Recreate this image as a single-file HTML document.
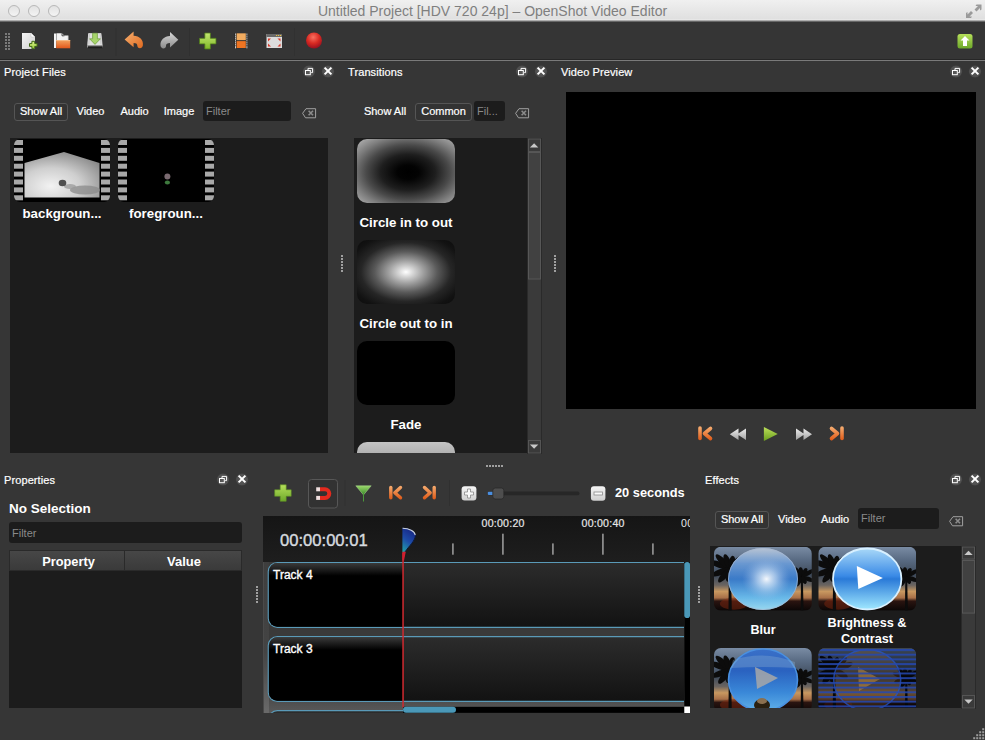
<!DOCTYPE html>
<html><head><meta charset="utf-8">
<style>
*{margin:0;padding:0;box-sizing:border-box}
html,body{width:985px;height:740px;overflow:hidden;background:#363636}
body{font-family:"Liberation Sans",sans-serif;color:#fff;position:relative}
.a{position:absolute}
svg{position:absolute;overflow:visible}
#title{left:0;top:0;width:985px;height:22px;background:linear-gradient(#f0f0f0,#e0e0e0 85%,#eaeaea 90%,#8a8a8a 95%,#4a4a4a)}
#title .t{position:absolute;left:0;width:985px;top:3px;text-align:center;font-size:14px;color:#7f7f7f;padding-left:0px}
.lt{position:absolute;top:5px;width:12px;height:12px;border-radius:50%;border:1px solid #b8b8b8;background:linear-gradient(#e2e2e2,#f4f4f4)}
#tb{left:0;top:22px;width:985px;height:38px;background:#353535}
#sep{left:0;top:59px;width:985px;height:2px;background:linear-gradient(#262626 50%,#7a7a7a 50%)}
.pt{position:absolute;font-size:11px;color:#fff;line-height:12px;-webkit-text-stroke:0.2px #fff;letter-spacing:0.1px}
.list{position:absolute;background:#1c1c1c}
.btn{position:absolute;font-size:11px;color:#fff;-webkit-text-stroke:0.2px #fff;height:18px;line-height:16px;text-align:center;white-space:nowrap}
.sel{border:1px solid #555;border-radius:3px;background:#333;line-height:14.5px}
.filt{position:absolute;background:#1c1c1c;border-radius:3px;font-size:11px;color:#8a8a8a;padding-left:3px;line-height:20px;white-space:nowrap}
.dk{position:absolute;width:12px;height:12px;border-radius:50%;background:radial-gradient(#5a5a5a,#444 60%,#3a3a3a)}
.lbl{position:absolute;font-size:13.3px;font-weight:bold;color:#fff;white-space:nowrap;line-height:15px;text-align:center}
.vsep{position:absolute;width:1px;background:#2a2a2a;border-right:1px solid #444}
.dots{position:absolute;width:2px;background:repeating-linear-gradient(#a0a0a0 0 2px,transparent 2px 3px)}
.hdots{position:absolute;height:2px;background:repeating-linear-gradient(90deg,#a0a0a0 0 2px,transparent 2px 3px)}
.thumb{position:absolute;width:96px;height:63px;border-radius:6px;background:#000;overflow:hidden}
.spr{position:absolute;top:0;width:9px;height:63px;background:repeating-linear-gradient(#000 0 2px,#a8a8a8 2px 7px,#000 7px 8px)}
.sb{position:absolute;background:#3c3c3c;border:1px solid #2c2c2c}
.sbb{position:absolute;background:#474747;border:1px solid #5a5a5a}
</style></head><body>
<div id="title" class="a">
  <div class="lt" style="left:8px"></div>
  <div class="lt" style="left:28px"></div>
  <div class="lt" style="left:48px"></div>
  <svg width="20" height="20" style="left:965px;top:2px" viewBox="965 2 20 20"><g fill="#9a9a9a"><path d="M974.5 9.5 l3.5 -3.5 h-2.5 l1 -1.5 h5 v5 l-1.5 1 v-2.5 l-3.5 3.5 z"/><path d="M973 13 l-3.5 3.5 h2.5 l-1 1.5 h-5 v-5 l1.5 -1 v2.5 l3.5 -3.5 z"/></g></svg>
  <div class="t">Untitled Project [HDV 720 24p] – OpenShot Video Editor</div>
</div>
<div id="tb" class="a"></div>
<svg width="985" height="40" style="left:0;top:22px" viewBox="0 22 985 40">
<defs>
<linearGradient id="gpage" x1="0" y1="0" x2="1" y2="1"><stop offset="0" stop-color="#f4f4f4"/><stop offset="1" stop-color="#d0d0d0"/></linearGradient>
<linearGradient id="ggreen" x1="0" y1="0" x2="0" y2="1"><stop offset="0" stop-color="#b6e05a"/><stop offset="1" stop-color="#6da82a"/></linearGradient>
<linearGradient id="gorange" x1="0" y1="0" x2="0" y2="1"><stop offset="0" stop-color="#f4a460"/><stop offset="1" stop-color="#e2571a"/></linearGradient>
<linearGradient id="gundo" x1="0" y1="0" x2="1" y2="1"><stop offset="0" stop-color="#f6b070"/><stop offset="1" stop-color="#e06a20"/></linearGradient>
<linearGradient id="ggray" x1="0" y1="0" x2="0" y2="1"><stop offset="0" stop-color="#d8d8d8"/><stop offset="1" stop-color="#8c8c8c"/></linearGradient>
<radialGradient id="gred" cx="0.45" cy="0.3" r="0.7"><stop offset="0" stop-color="#f87060"/><stop offset="0.55" stop-color="#d82a22"/><stop offset="1" stop-color="#981020"/></radialGradient>
<radialGradient id="gdk"><stop offset="0" stop-color="#5c5c5c"/><stop offset="0.6" stop-color="#535353"/><stop offset="0.88" stop-color="#4e4e4e"/><stop offset="1" stop-color="#3e3e3e"/></radialGradient>
</defs>
<g fill="#7a7a7a">
<rect x="5" y="33" width="2" height="2"/><rect x="8" y="33" width="2" height="2"/>
<rect x="5" y="36" width="2" height="2"/><rect x="8" y="36" width="2" height="2"/>
<rect x="5" y="39" width="2" height="2"/><rect x="8" y="39" width="2" height="2"/>
<rect x="5" y="42" width="2" height="2"/><rect x="8" y="42" width="2" height="2"/>
<rect x="5" y="45" width="2" height="2"/><rect x="8" y="45" width="2" height="2"/>
<rect x="5" y="48" width="2" height="2"/><rect x="8" y="48" width="2" height="2"/>
</g>
<!-- new -->
<path d="M22 33 H31 L35 37 V49 H22 Z" fill="url(#gpage)"/>
<path d="M31 33 V37 H35" fill="#fff" stroke="#c8c8c8" stroke-width="0.6"/>
<linearGradient id="gnp" x1="0" y1="0" x2="0" y2="1"><stop offset="0" stop-color="#e0f890"/><stop offset="1" stop-color="#98c838"/></linearGradient><path d="M31.9 41.3 h2.8 v2.3 h2.4 v2.8 h-2.4 v2.3 h-2.8 v-2.3 h-2.4 v-2.8 h2.4 z" fill="url(#gnp)" stroke="#3e6414" stroke-width="1"/>
<!-- open -->
<rect x="54" y="33.5" width="2.2" height="14.5" fill="#f4f4f4"/>
<path d="M56.5 33.2 H62 L64.2 35.6 H68.2 V40.5 H56.5 Z" fill="#f2f2f2"/>
<path d="M62 33.2 V35.8 H64.4" fill="none" stroke="#3a3a3a" stroke-width="0.9"/>
<path d="M68.2 35.6 V40.5" stroke="#bbb" stroke-width="0.6"/>
<path d="M56.2 40 H70.2 V48.3 H56.2 Z" fill="url(#gorange)"/>
<rect x="56.2" y="40" width="14" height="1" fill="#f8c090" opacity="0.8"/>
<!-- save -->
<path d="M88.3 33.2 H101.3 L102.8 45.5 V47.5 H87 V45.5 Z" fill="url(#ggray)"/>
<path d="M88.5 33.5 H101 L102.2 45 H87.6 Z" fill="#e2e2e2"/>
<path d="M89.5 34 L88.8 44.5 M100.2 34 L101 44.5" stroke="#b8b8b8" stroke-width="0.6"/>
<rect x="88" y="46.3" width="14.5" height="2" fill="#1e1e1e"/>
<path d="M92.6 33.2 h4.8 v5.6 h3 l-5.4 5.6 l-5.4 -5.6 h3 z" fill="#a6d46a" stroke="#6a9a3a" stroke-width="0.7"/>
<rect x="115.5" y="28" width="1" height="28" fill="#303030"/>
<!-- undo -->
<path d="M124.6 39.4 L133.6 31.6 V35.8 C139.5 36 143.6 40 142.9 45.3 C142.6 47.2 141.4 48.2 139.9 48.2 C138.4 48.2 137.3 47.2 137.3 45.6 C137.3 43.6 136 42.9 133.6 42.9 V47.2 Z" fill="url(#gundo)"/>
<!-- redo -->
<path d="M178.3 39.7 L170 32 V36 C164.3 36.2 160 40 160.5 45.5 C160.7 47.3 161.9 48.4 163.4 48.4 C164.9 48.4 166 47.4 166 45.7 C166 43.7 167.4 42.9 170 42.9 V47.4 Z" fill="url(#ggray)"/>
<rect x="189" y="28" width="1" height="28" fill="#303030"/>
<!-- add -->
<linearGradient id="gpl2" x1="0" y1="0" x2="0" y2="1"><stop offset="0" stop-color="#c4e870"/><stop offset="1" stop-color="#80b828"/></linearGradient><path d="M204.8 33 h5.6 v5.3 h5.6 v5.6 h-5.6 v5.1 h-5.6 v-5.1 h-5.3 v-5.6 h5.3 z" fill="url(#gpl2)" stroke="#4e7a1a" stroke-width="0.8"/>
<!-- film -->
<rect x="234.3" y="33" width="13.3" height="15.3" fill="#2a2a2a"/>
<rect x="236.6" y="33.3" width="9.2" height="6.9" fill="#f2ac60"/>
<rect x="236.6" y="41.1" width="9.2" height="6.9" fill="#ee7422"/>
<g fill="#f4f4f4"><rect x="235" y="33.6" width="1" height="1.1"/><rect x="246.4" y="33.6" width="1" height="1.1"/><rect x="235" y="35.6" width="1" height="1.1"/><rect x="246.4" y="35.6" width="1" height="1.1"/><rect x="235" y="37.6" width="1" height="1.1"/><rect x="246.4" y="37.6" width="1" height="1.1"/><rect x="235" y="39.6" width="1" height="1.1"/><rect x="246.4" y="39.6" width="1" height="1.1"/><rect x="235" y="41.6" width="1" height="1.1"/><rect x="246.4" y="41.6" width="1" height="1.1"/><rect x="235" y="43.6" width="1" height="1.1"/><rect x="246.4" y="43.6" width="1" height="1.1"/><rect x="235" y="45.6" width="1" height="1.1"/><rect x="246.4" y="45.6" width="1" height="1.1"/><rect x="235" y="47.2" width="1" height="1.1"/><rect x="246.4" y="47.2" width="1" height="1.1"/></g>
<!-- fullscreen -->
<rect x="266.5" y="34" width="15.5" height="14" fill="#dcdcdc"/>
<rect x="266.5" y="34" width="15.5" height="3" fill="#6a6a6a"/>
<g fill="#e8c040"><rect x="276" y="35" width="1.2" height="1"/><rect x="278" y="35" width="1.2" height="1"/><rect x="280" y="35" width="1.2" height="1"/></g>
<g fill="#d83a2a"><path d="M268 38.5 h3 l-3 3 z"/><path d="M280.5 38.5 h-3 l3 3 z"/><path d="M268 46.5 h3 l-3 -3 z"/><path d="M280.5 46.5 h-3 l3 -3 z"/></g>
<rect x="294" y="28" width="1" height="28" fill="#313131"/>
<!-- record -->
<circle cx="314" cy="40.5" r="8" fill="url(#gred)"/>
<!-- upload -->
<rect x="957.5" y="34" width="15" height="14.5" rx="2.5" fill="url(#ggreen)"/>
<path d="M965 36 l4.5 4.5 h-2.5 v5.5 h-4 v-5.5 h-2.5 z" fill="#fff"/>
</svg>
<div id="sep" class="a"></div>

<!-- ============ Project files ============ -->
<div class="pt" style="left:4px;top:66px">Project Files</div>
<svg width="40" height="14" style="left:301px;top:65px" viewBox="301 65 40 14">
<circle cx="309" cy="71.5" r="6.2" fill="url(#gdk)"/><circle cx="328" cy="71.5" r="6.2" fill="url(#gdk)"/>
<path d="M308 70.0 v-1.6 h4.6 v4.2 h-1.4" fill="none" stroke="#fff" stroke-width="1"/>
<rect x="305.5" y="70.5" width="4.8" height="4.2" fill="none" stroke="#fff" stroke-width="1"/>
<path d="M324.6 67.6 l6.8 6.8 M331.4 67.6 l-6.8 6.8" stroke="#fff" stroke-width="2" stroke-linecap="butt"/>
</svg>
<div class="btn sel" style="left:14px;top:103px;width:54px">Show All</div>
<div class="btn" style="left:72px;top:103px;width:37px">Video</div>
<div class="btn" style="left:116px;top:103px;width:37px">Audio</div>
<div class="btn" style="left:159px;top:103px;width:40px">Image</div>
<div class="filt" style="left:203px;top:101px;width:88px;height:20px">Filter</div>
<svg width="16" height="12" style="left:302px;top:108px" viewBox="0 0 16 12"><path d="M0.6 5.3 L4 0.7 H13.6 V9.8 H3.5 Z" fill="none" stroke="#a0a0a0" stroke-width="1"/><path d="M6.6 2.8 l4.4 4.4 M11 2.8 l-4.4 4.4" stroke="#8c8c8c" stroke-width="1.6"/></svg>
<div class="list" style="left:10px;top:138px;width:318px;height:315px"></div>
<svg width="96" height="63" style="left:14px;top:139px" viewBox="0 0 96 63">
<defs><radialGradient id="groom" cx="0.35" cy="0.75" r="0.8"><stop offset="0" stop-color="#f2f2f2"/><stop offset="0.5" stop-color="#cfcfcf"/><stop offset="1" stop-color="#8a8a8a"/></radialGradient></defs>
<rect x="0" y="0" width="96" height="63" rx="6" fill="#000"/><clipPath id="cl1"><rect x="0" y="0" width="96" height="63" rx="6"/></clipPath><g clip-path="url(#cl1)"><rect x="0" y="1.0" width="9" height="5" fill="#a8a8a8"/><rect x="0" y="8.9" width="9" height="5" fill="#a8a8a8"/><rect x="0" y="16.8" width="9" height="5" fill="#a8a8a8"/><rect x="0" y="24.7" width="9" height="5" fill="#a8a8a8"/><rect x="0" y="32.6" width="9" height="5" fill="#a8a8a8"/><rect x="0" y="40.5" width="9" height="5" fill="#a8a8a8"/><rect x="0" y="48.4" width="9" height="5" fill="#a8a8a8"/><rect x="0" y="56.3" width="9" height="5" fill="#a8a8a8"/><rect x="87" y="1.0" width="9" height="5" fill="#a8a8a8"/><rect x="87" y="8.9" width="9" height="5" fill="#a8a8a8"/><rect x="87" y="16.8" width="9" height="5" fill="#a8a8a8"/><rect x="87" y="24.7" width="9" height="5" fill="#a8a8a8"/><rect x="87" y="32.6" width="9" height="5" fill="#a8a8a8"/><rect x="87" y="40.5" width="9" height="5" fill="#a8a8a8"/><rect x="87" y="48.4" width="9" height="5" fill="#a8a8a8"/><rect x="87" y="56.3" width="9" height="5" fill="#a8a8a8"/></g>
<path d="M10.5 24 L50 13 L85.5 24 V58.5 H10.5 Z" fill="url(#groom)"/>
<ellipse cx="71" cy="51" rx="15" ry="4.6" fill="#8a8a8a" opacity="0.75"/>
<ellipse cx="56" cy="47.5" rx="6" ry="2.6" fill="#9a9a9a" opacity="0.75"/>
<ellipse cx="48.5" cy="44" rx="3.8" ry="3.2" fill="#505050"/>
</svg>
<div class="lbl" style="left:10px;top:206px;width:104px;font-size:13.3px">backgroun...</div>
<svg width="96" height="63" style="left:118px;top:139px" viewBox="0 0 96 63">
<rect x="0" y="0" width="96" height="63" rx="6" fill="#000"/><clipPath id="cl2"><rect x="0" y="0" width="96" height="63" rx="6"/></clipPath><g clip-path="url(#cl2)"><rect x="0" y="1.0" width="9" height="5" fill="#a8a8a8"/><rect x="0" y="8.9" width="9" height="5" fill="#a8a8a8"/><rect x="0" y="16.8" width="9" height="5" fill="#a8a8a8"/><rect x="0" y="24.7" width="9" height="5" fill="#a8a8a8"/><rect x="0" y="32.6" width="9" height="5" fill="#a8a8a8"/><rect x="0" y="40.5" width="9" height="5" fill="#a8a8a8"/><rect x="0" y="48.4" width="9" height="5" fill="#a8a8a8"/><rect x="0" y="56.3" width="9" height="5" fill="#a8a8a8"/><rect x="87" y="1.0" width="9" height="5" fill="#a8a8a8"/><rect x="87" y="8.9" width="9" height="5" fill="#a8a8a8"/><rect x="87" y="16.8" width="9" height="5" fill="#a8a8a8"/><rect x="87" y="24.7" width="9" height="5" fill="#a8a8a8"/><rect x="87" y="32.6" width="9" height="5" fill="#a8a8a8"/><rect x="87" y="40.5" width="9" height="5" fill="#a8a8a8"/><rect x="87" y="48.4" width="9" height="5" fill="#a8a8a8"/><rect x="87" y="56.3" width="9" height="5" fill="#a8a8a8"/></g>
<ellipse cx="49.4" cy="43.5" rx="2.6" ry="2" fill="#3e7a3e"/>
<circle cx="49.4" cy="37.6" r="3" fill="#7a6a70"/>
</svg>
<div class="lbl" style="left:114px;top:206px;width:104px;font-size:13.3px">foregroun...</div>
<div class="dots" style="left:341px;top:255px;height:17px"></div>

<!-- ============ Transitions ============ -->
<div class="pt" style="left:348px;top:66px">Transitions</div>
<svg width="40" height="14" style="left:514px;top:65px" viewBox="514 65 40 14">
<circle cx="522" cy="71.5" r="6.2" fill="url(#gdk)"/><circle cx="541" cy="71.5" r="6.2" fill="url(#gdk)"/>
<path d="M521 70.0 v-1.6 h4.6 v4.2 h-1.4" fill="none" stroke="#fff" stroke-width="1"/>
<rect x="518.5" y="70.5" width="4.8" height="4.2" fill="none" stroke="#fff" stroke-width="1"/>
<path d="M537.6 67.6 l6.8 6.8 M544.4 67.6 l-6.8 6.8" stroke="#fff" stroke-width="2" stroke-linecap="butt"/>
</svg>
<div class="btn" style="left:360px;top:103px;width:50px">Show All</div>
<div class="btn sel" style="left:415px;top:103px;width:57px">Common</div>
<div class="filt" style="left:474px;top:101px;width:31px;height:20px">Fil...</div>
<svg width="16" height="12" style="left:515px;top:108px" viewBox="0 0 16 12"><path d="M0.6 5.3 L4 0.7 H13.6 V9.8 H3.5 Z" fill="none" stroke="#a0a0a0" stroke-width="1"/><path d="M6.6 2.8 l4.4 4.4 M11 2.8 l-4.4 4.4" stroke="#8c8c8c" stroke-width="1.6"/></svg>
<div class="list" style="left:354px;top:138px;width:174px;height:315px;overflow:hidden">
  <div class="a" style="left:3px;top:1px;width:98px;height:64px;border-radius:10px;background:radial-gradient(ellipse farthest-corner at 52% 52%,#000 0%,#030303 15%,#1e1e1e 38%,#4a4a4a 58%,#7c7c7c 76%,#b8b8b8 100%)"></div>
  <div class="lbl" style="left:0;top:77px;width:104px">Circle in to out</div>
  <div class="a" style="left:3px;top:102px;width:98px;height:64px;border-radius:10px;background:radial-gradient(ellipse farthest-corner at 50% 50%,#fff 0%,#d8d8d8 10%,#a0a0a0 25%,#5a5a5a 45%,#262626 65%,#121212 85%,#0c0c0c 100%)"></div>
  <div class="lbl" style="left:0;top:178px;width:104px">Circle out to in</div>
  <div class="a" style="left:3px;top:203px;width:98px;height:64px;border-radius:10px;background:#000"></div>
  <div class="lbl" style="left:0;top:279px;width:104px">Fade</div>
  <div class="a" style="left:3px;top:304px;width:98px;height:64px;border-radius:10px;background:linear-gradient(#c4c4c4,#9a9a9a 40%,#808080)"></div>
</div>
<svg width="15" height="316" style="left:527px;top:137.5px" viewBox="527 137.5 15 316">
<rect x="527.5" y="138" width="14" height="315" fill="#3a3a3a" stroke="#2a2a2a" stroke-width="1"/>
<rect x="528.5" y="138.5" width="12" height="12.5" fill="#3a3a3a" stroke="#555" stroke-width="1"/>
<path d="M534.1 142.8 L538.3 147 H529.9 Z" fill="#c8c8c8"/>
<rect x="528.5" y="152" width="12" height="126.5" fill="#414141" stroke="#575757" stroke-width="1"/>
<rect x="528.5" y="440" width="12" height="12.5" fill="#3a3a3a" stroke="#555" stroke-width="1"/>
<path d="M534.1 448.2 L538.3 444 H529.9 Z" fill="#c8c8c8"/>
</svg>
<div class="dots" style="left:554px;top:255px;height:17px"></div>

<!-- ============ Video preview ============ -->
<div class="pt" style="left:561px;top:66px">Video Preview</div>
<svg width="40" height="14" style="left:948px;top:65px" viewBox="948 65 40 14">
<circle cx="956" cy="71.5" r="6.2" fill="url(#gdk)"/><circle cx="975" cy="71.5" r="6.2" fill="url(#gdk)"/>
<path d="M955 70.0 v-1.6 h4.6 v4.2 h-1.4" fill="none" stroke="#fff" stroke-width="1"/>
<rect x="952.5" y="70.5" width="4.8" height="4.2" fill="none" stroke="#fff" stroke-width="1"/>
<path d="M971.6 67.6 l6.8 6.8 M978.4 67.6 l-6.8 6.8" stroke="#fff" stroke-width="2" stroke-linecap="butt"/>
</svg>
<div class="a" style="left:566px;top:92px;width:410px;height:317px;background:#000"></div>

<svg width="160" height="24" style="left:690px;top:422px" viewBox="690 422 160 24">
<defs>
<linearGradient id="gor2" gradientUnits="userSpaceOnUse" x1="0" y1="426" x2="0" y2="441"><stop offset="0" stop-color="#f7b276"/><stop offset="1" stop-color="#df5512"/></linearGradient>
<linearGradient id="ggr2" x1="0" y1="0" x2="0" y2="1"><stop offset="0" stop-color="#ececec"/><stop offset="1" stop-color="#a2a2a2"/></linearGradient>
<linearGradient id="ggn2" x1="0" y1="0" x2="0" y2="1"><stop offset="0" stop-color="#bde05a"/><stop offset="1" stop-color="#6a9e1e"/></linearGradient>
</defs>
<g stroke="url(#gor2)" stroke-width="3.6" stroke-linecap="round" stroke-linejoin="round" fill="none">
<path d="M700 428 V438.5"/><path d="M710.5 428.5 L704.5 433.5 L710.5 438.5"/>
<path d="M842 428 V438.5"/><path d="M831.5 428.5 L837.5 433.5 L831.5 438.5"/>
</g>
<path d="M729.8 434.2 L738.5 428.6 V439.9 Z M737.2 434.2 L746 428.6 V439.9 Z" fill="url(#ggr2)"/>
<path d="M763.9 426.9 L777.7 433.9 L763.9 441 Z" fill="url(#ggn2)"/>
<path d="M796 428.6 L804.6 434.2 L796 439.9 Z M803.5 428.6 L812 434.2 L803.5 439.9 Z" fill="url(#ggr2)"/>
</svg>
<div class="hdots" style="left:486px;top:465px;width:17px"></div>

<!-- ============ Properties ============ -->
<div class="pt" style="left:4px;top:474px">Properties</div>
<svg width="40" height="14" style="left:215px;top:473px" viewBox="215 473 40 14">
<circle cx="223" cy="479.5" r="6.2" fill="url(#gdk)"/><circle cx="242" cy="479.5" r="6.2" fill="url(#gdk)"/>
<path d="M222 478.0 v-1.6 h4.6 v4.2 h-1.4" fill="none" stroke="#fff" stroke-width="1"/>
<rect x="219.5" y="478.5" width="4.8" height="4.2" fill="none" stroke="#fff" stroke-width="1"/>
<path d="M238.6 475.6 l6.8 6.8 M245.4 475.6 l-6.8 6.8" stroke="#fff" stroke-width="2" stroke-linecap="butt"/>
</svg>
<div class="a" style="left:9px;top:501px;font-size:13.5px;font-weight:bold;line-height:16px">No Selection</div>
<div class="filt" style="left:9px;top:522px;width:233px;height:21px;line-height:22px">Filter</div>
<div class="list" style="left:9px;top:550px;width:233px;height:158px"></div>
<div class="a" style="left:9px;top:550px;width:233px;height:21px;background:linear-gradient(#474747,#3a3a3a);border:1px solid #2a2a2a"></div>
<div class="a" style="left:124px;top:551px;width:1px;height:20px;background:#2a2a2a"></div>
<div class="a" style="left:10px;top:554px;width:114px;font-size:12.8px;font-weight:bold;text-align:center;line-height:15px;padding-left:3px">Property</div>
<div class="a" style="left:125px;top:554px;width:117px;font-size:13px;font-weight:bold;text-align:center;line-height:15px;padding-left:1px">Value</div>
<div class="dots" style="left:256px;top:586px;height:17px"></div>

<!-- ============ Timeline ============ -->
<svg width="240" height="34" style="left:265px;top:476px" viewBox="265 476 240 34">
<defs>
<linearGradient id="gmk" x1="0" y1="0" x2="0" y2="1"><stop offset="0" stop-color="#9ad86a"/><stop offset="1" stop-color="#3a8a2a"/></linearGradient>
<linearGradient id="gwb" x1="0" y1="0" x2="0" y2="1"><stop offset="0" stop-color="#f6f6f6"/><stop offset="1" stop-color="#cfcfcf"/></linearGradient>
<linearGradient id="gor3" gradientUnits="userSpaceOnUse" x1="0" y1="485" x2="0" y2="500"><stop offset="0" stop-color="#f7b276"/><stop offset="1" stop-color="#df5512"/></linearGradient>
</defs>
<path d="M280.2 484.8 h6 v5 h5 v6.5 h-5 v5 h-6 v-5 h-5.5 v-6.5 h5.5 z" fill="url(#ggreen)" stroke="#5c8f22" stroke-width="0.6"/>
<rect x="308.5" y="479.5" width="29" height="28.5" rx="3" fill="#323232" stroke="#575757" stroke-width="1"/>
<path d="M320 489.3 H325 A4.3 4.3 0 0 1 325 497.9 H320" fill="none" stroke="#e42a1e" stroke-width="4"/>
<rect x="316.2" y="487.3" width="3.8" height="4" fill="#f0e0e0"/><rect x="316.2" y="495.9" width="3.8" height="4" fill="#f0e0e0"/>
<rect x="344.5" y="480" width="1" height="26" fill="#303030"/>
<path d="M355.8 485.8 H371.2 L363.5 494.9 Z" fill="url(#gmk)" stroke="#a8d890" stroke-width="0.5"/>
<rect x="363" y="494" width="1" height="7.5" fill="#4a9a3a"/>
<g stroke="url(#gor3)" stroke-width="3.4" stroke-linecap="round" stroke-linejoin="round" fill="none">
<path d="M390.8 487.5 V497.8"/><path d="M400.5 487.5 L394.8 492.7 L400.5 497.8"/>
<path d="M434.2 487.5 V497.8"/><path d="M424.5 487.5 L430.2 492.7 L424.5 497.8"/>
</g>
<rect x="449" y="480" width="1" height="26" fill="#303030"/>
<rect x="461.6" y="486.2" width="14.8" height="14.4" rx="3" fill="url(#gwb)"/>
<path d="M467.5 489 h3 v3 h3 v3 h-3 v3 h-3 v-3 h-3 v-3 h3 z" fill="#fafafa" stroke="#8a8a8a" stroke-width="0.8"/>
<rect x="487.8" y="491.5" width="91.7" height="3.8" rx="1.9" fill="#272727"/>
<rect x="487.8" y="491.8" width="6" height="3.2" rx="1" fill="#4a8ee0"/>
<rect x="492.8" y="488" width="11" height="11" rx="2.5" fill="#4e4e4e" stroke="#2a2a2a" stroke-width="0.8"/>
<rect x="590.9" y="486.2" width="14.5" height="14.5" rx="3" fill="url(#gwb)"/>
<rect x="594" y="492" width="8.4" height="3" fill="#fafafa" stroke="#8a8a8a" stroke-width="0.8"/>
</svg>
<div class="a" style="left:615px;top:485px;font-size:12.8px;font-weight:bold;line-height:15px;white-space:nowrap">20 seconds</div>

<!-- timeline body -->
<div class="a" style="left:263px;top:516px;width:427px;height:197px;background:#3c3c3c;overflow:hidden">
  <div class="a" style="left:0;top:0;width:427px;height:46px;background:linear-gradient(#151515,#1e1e1e)"></div>
  <div class="a" style="left:0;top:46px;width:427px;height:151px;background:linear-gradient(#3a3a3a 0,#3a3a3a 120px,#5a5a5a 151px)"></div><div class="a" style="left:0;top:46px;width:6px;height:151px;background:linear-gradient(#3e3e3e,#444 60%,#6a6a6a)"></div><div class="a" style="left:0;top:46px;width:1px;height:151px;background:#4a4a4a"></div>
</div>
<div class="a" style="left:280px;top:531px;font-size:16.6px;color:#d6dadf;line-height:19px;white-space:nowrap;-webkit-text-stroke:0.4px #d6dadf">00:00:00:01</div>
<div class="a" style="left:481.5px;top:517px;font-size:10.6px;color:#e6e6e6;line-height:12px;letter-spacing:0.25px;-webkit-text-stroke:0.2px #e6e6e6">00:00:20</div>
<div class="a" style="left:581.5px;top:517px;font-size:10.6px;color:#e6e6e6;line-height:12px;letter-spacing:0.25px;-webkit-text-stroke:0.2px #e6e6e6">00:00:40</div>
<div class="a" style="left:681px;top:517px;width:9px;overflow:hidden;font-size:10.6px;color:#e6e6e6;line-height:12px;letter-spacing:0.25px;white-space:nowrap">00:01:00</div>
<svg width="427" height="197" style="left:263px;top:516px" viewBox="263 516 427 197">
<defs>
<linearGradient id="gtrl" x1="0" y1="0" x2="0" y2="1"><stop offset="0" stop-color="#3a3a3a"/><stop offset="0.2" stop-color="#000"/><stop offset="1" stop-color="#000"/></linearGradient>
<linearGradient id="gtrr" x1="0" y1="0" x2="0" y2="1"><stop offset="0" stop-color="#2c2c2c"/><stop offset="1" stop-color="#121212"/></linearGradient>
<linearGradient id="gph" x1="0.4" y1="0" x2="0" y2="1"><stop offset="0" stop-color="#182a88"/><stop offset="0.45" stop-color="#1e4ca8"/><stop offset="1" stop-color="#22a8a8"/></linearGradient>
<clipPath id="ctr"><rect x="263" y="516" width="421" height="197"/></clipPath>
</defs>
<g fill="#8a8a8a">
<rect x="452" y="543.4" width="1.8" height="11.3"/><rect x="552" y="543.4" width="1.8" height="11.3"/><rect x="652" y="543.4" width="1.8" height="11.3"/>
<rect x="502" y="533.7" width="1.8" height="21"/><rect x="602" y="533.7" width="1.8" height="21"/>
</g>
<g clip-path="url(#ctr)">
<rect x="268.3" y="562.5" width="440" height="64.8" rx="9" fill="url(#gtrr)" stroke="#5a9ab8" stroke-width="1.2"/>
<path d="M403 563.1 H277.3 A8.4 8.4 0 0 0 268.9 571.5 V618.3 A8.4 8.4 0 0 0 277.3 626.7 H403 Z" fill="url(#gtrl)"/>
<rect x="268.3" y="636.6" width="440" height="64.8" rx="9" fill="url(#gtrr)" stroke="#5a9ab8" stroke-width="1.2"/>
<path d="M403 637.2 H277.3 A8.4 8.4 0 0 0 268.9 645.6 V692.4 A8.4 8.4 0 0 0 277.3 700.8 H403 Z" fill="url(#gtrl)"/>
<rect x="268.3" y="710.7" width="440" height="64.8" rx="9" fill="url(#gtrr)" stroke="#5a9ab8" stroke-width="1.2"/>
</g>
<rect x="684.3" y="562" width="5.7" height="151" fill="#000"/>
<rect x="684.3" y="562" width="5.7" height="56" rx="2.8" fill="#4a98b8"/>
<rect x="403" y="706.8" width="281.3" height="6" fill="#000"/>
<rect x="403" y="706.8" width="53" height="6" rx="3" fill="#4a98b8"/>
<rect x="684.3" y="706.5" width="5.7" height="6.5" fill="#fff"/>
<rect x="402.3" y="553" width="1.5" height="154.3" fill="#d02a30"/>
<path d="M402.4 527.8 C409 527.8 415.6 531 415.6 535.5 C415.6 541 409 546 405.1 551.8 L402.4 552.5 Z" fill="url(#gph)"/>
<path d="M402.6 528.3 C409 528.3 414.8 531 415.2 535" fill="none" stroke="#c8d0dc" stroke-width="1.1"/><path d="M415.4 536 C415 541 409 546 405.1 551.8" fill="none" stroke="#0c1830" stroke-width="1"/>
<path d="M402.4 551.8 L405.8 551.8 L404 560.5 L402.4 560.5 Z" fill="#d02030"/>
</svg>
<div class="a" style="left:273px;top:569px;font-size:12px;line-height:13px;color:#fff;-webkit-text-stroke:0.35px #fff">Track 4</div>
<div class="a" style="left:273px;top:643px;font-size:12px;line-height:13px;color:#fff;-webkit-text-stroke:0.35px #fff">Track 3</div>

<!-- ============ Effects ============ -->
<div class="pt" style="left:705px;top:474px">Effects</div>
<svg width="40" height="14" style="left:948px;top:473px" viewBox="948 473 40 14">
<circle cx="956" cy="479.5" r="6.2" fill="url(#gdk)"/><circle cx="975" cy="479.5" r="6.2" fill="url(#gdk)"/>
<path d="M955 478.0 v-1.6 h4.6 v4.2 h-1.4" fill="none" stroke="#fff" stroke-width="1"/>
<rect x="952.5" y="478.5" width="4.8" height="4.2" fill="none" stroke="#fff" stroke-width="1"/>
<path d="M971.6 475.6 l6.8 6.8 M978.4 475.6 l-6.8 6.8" stroke="#fff" stroke-width="2" stroke-linecap="butt"/>
</svg>
<div class="btn sel" style="left:715px;top:511px;width:54px">Show All</div>
<div class="btn" style="left:776px;top:511px;width:32px">Video</div>
<div class="btn" style="left:819px;top:511px;width:32px">Audio</div>
<div class="filt" style="left:858px;top:508px;width:81px;height:21px">Filter</div>
<svg width="16" height="12" style="left:949px;top:515.5px" viewBox="0 0 16 12"><path d="M0.6 5.3 L4 0.7 H13.6 V9.8 H3.5 Z" fill="none" stroke="#a0a0a0" stroke-width="1"/><path d="M6.6 2.8 l4.4 4.4 M11 2.8 l-4.4 4.4" stroke="#8c8c8c" stroke-width="1.6"/></svg>
<div class="list" style="left:710px;top:546px;width:252px;height:162px"></div>
<svg width="252" height="162" style="left:710px;top:546px;overflow:hidden" viewBox="710 546 252 162">
<defs>
<linearGradient id="gsky" x1="0" y1="0" x2="0" y2="1">
<stop offset="0" stop-color="#7a8ca4"/><stop offset="0.2" stop-color="#5a6c84"/><stop offset="0.45" stop-color="#3e4a5a"/><stop offset="0.6" stop-color="#6a6460"/>
<stop offset="0.7" stop-color="#c89860"/><stop offset="0.8" stop-color="#a87048"/><stop offset="0.85" stop-color="#2a1410"/><stop offset="1" stop-color="#0a0606"/></linearGradient>
<linearGradient id="gsph1" x1="0" y1="0" x2="0" y2="1"><stop offset="0" stop-color="#b8c4d4"/><stop offset="0.25" stop-color="#6a98d0"/><stop offset="0.5" stop-color="#3a7ac8"/><stop offset="0.8" stop-color="#68b8e8"/><stop offset="1" stop-color="#98d8f0"/></linearGradient><radialGradient id="ghl1" cx="0.55" cy="0.5" r="0.35"><stop offset="0" stop-color="#fff" stop-opacity="0.95"/><stop offset="0.4" stop-color="#d8e8f8" stop-opacity="0.6"/><stop offset="1" stop-color="#8ab0e0" stop-opacity="0"/></radialGradient><filter id="fbl" x="-10%" y="-10%" width="120%" height="120%"><feGaussianBlur stdDeviation="0.7"/></filter>
<linearGradient id="gsph2" x1="0" y1="0" x2="0" y2="1"><stop offset="0" stop-color="#a8d8f8"/><stop offset="0.45" stop-color="#3a8ae6"/><stop offset="0.5" stop-color="#2a7ad8"/><stop offset="1" stop-color="#a0e8ff"/></linearGradient>
<linearGradient id="gsph3" x1="0" y1="0" x2="0" y2="1"><stop offset="0" stop-color="#3a70c8"/><stop offset="0.35" stop-color="#2a62c0"/><stop offset="0.7" stop-color="#3a88d8"/><stop offset="1" stop-color="#60b0e8"/></linearGradient>
<symbol id="sunset" viewBox="0 0 98 64">
<rect width="98" height="64" fill="url(#gsky)"/>
<ellipse cx="20" cy="57" rx="14" ry="6" fill="#8a2a10" opacity="0.45"/>
<g fill="#0c0c0c"><path d="M14.9 22.0 L17.1 22.0 L17.9 64 L14.6 64 Z"/><ellipse cx="5.7" cy="18.2" rx="11.0" ry="3.1" transform="rotate(200 5.7 18.2)"/><ellipse cx="9.0" cy="15.0" rx="9.9" ry="3.1" transform="rotate(225 9.0 15.0)"/><ellipse cx="13.4" cy="14.8" rx="7.7" ry="3.1" transform="rotate(250 13.4 14.8)"/><ellipse cx="17.7" cy="15.6" rx="6.6" ry="3.1" transform="rotate(285 17.7 15.6)"/><ellipse cx="22.2" cy="15.8" rx="8.8" ry="3.1" transform="rotate(315 22.2 15.8)"/><ellipse cx="25.3" cy="18.6" rx="9.9" ry="3.1" transform="rotate(340 25.3 18.6)"/><ellipse cx="6.7" cy="25.4" rx="9.9" ry="3.1" transform="rotate(160 6.7 25.4)"/><ellipse cx="10.3" cy="28.7" rx="8.8" ry="3.1" transform="rotate(130 10.3 28.7)"/><ellipse cx="14.9" cy="28.5" rx="6.6" ry="3.1" transform="rotate(100 14.9 28.5)"/><ellipse cx="22.7" cy="25.8" rx="7.7" ry="3.1" transform="rotate(30 22.7 25.8)"/><path d="M87.1 30.0 L88.9 30.0 L89.7 64 L86.8 64 Z"/><ellipse cx="81.2" cy="27.5" rx="7.2" ry="2.2" transform="rotate(200 81.2 27.5)"/><ellipse cx="83.9" cy="25.1" rx="6.4" ry="2.2" transform="rotate(230 83.9 25.1)"/><ellipse cx="87.2" cy="25.3" rx="4.8" ry="2.2" transform="rotate(260 87.2 25.3)"/><ellipse cx="90.4" cy="25.8" rx="4.8" ry="2.2" transform="rotate(300 90.4 25.8)"/><ellipse cx="94.2" cy="26.4" rx="7.2" ry="2.2" transform="rotate(330 94.2 26.4)"/><ellipse cx="82.0" cy="32.2" rx="6.4" ry="2.2" transform="rotate(160 82.0 32.2)"/><ellipse cx="85.2" cy="34.8" rx="5.6" ry="2.2" transform="rotate(120 85.2 34.8)"/><ellipse cx="94.0" cy="32.2" rx="6.4" ry="2.2" transform="rotate(20 94.0 32.2)"/><ellipse cx="90.0" cy="33.5" rx="4.0" ry="2.2" transform="rotate(60 90.0 33.5)"/></g>
</symbol>
<clipPath id="ce1"><rect x="713.9" y="546.7" width="98" height="64" rx="7"/></clipPath>
<clipPath id="ce2"><rect x="818.2" y="546.7" width="98" height="64" rx="7"/></clipPath>
<clipPath id="ce3"><rect x="713.9" y="648" width="98" height="64" rx="7"/></clipPath>
<clipPath id="ce4"><rect x="818.2" y="648" width="98" height="64" rx="7"/></clipPath>
<pattern id="pstr" patternUnits="userSpaceOnUse" x="0" y="649" width="4" height="4.7"><rect width="4" height="2" fill="#2448b0" opacity="0.85"/></pattern>
</defs>
<g clip-path="url(#ce1)">
<use href="#sunset" x="713.9" y="546.7" width="98" height="64"/>
<g filter="url(#fbl)"><ellipse cx="763" cy="579" rx="35" ry="31" fill="url(#gsph1)"/>
<ellipse cx="763" cy="579" rx="35" ry="31" fill="url(#ghl1)"/>
<ellipse cx="763" cy="579" rx="34.5" ry="30.5" fill="none" stroke="#a8b8d0" stroke-width="1" opacity="0.7"/></g>
</g>
<g clip-path="url(#ce2)">
<use href="#sunset" x="818.2" y="546.7" width="98" height="64"/>
<ellipse cx="867.2" cy="579" rx="34.2" ry="30.5" fill="url(#gsph2)" stroke="#d8f0ff" stroke-width="1.8"/>
<path d="M856.8 566 L882.9 577.9 L858.3 589 Z" fill="#fff"/>
</g>
<g clip-path="url(#ce3)">
<use href="#sunset" x="713.9" y="648" width="98" height="64"/>
<ellipse cx="763" cy="680" rx="34.5" ry="31" fill="url(#gsph3)" stroke="#4a90e0" stroke-width="1.6"/>
<path d="M733 660 Q763 650 795 662 L795 668 Q763 666 731 668 Z" fill="#8ab0d0" opacity="0.35"/>
<path d="M755 667 L778 678 L757 689 Z" fill="#a8a8a8" opacity="0.85"/>
<ellipse cx="762" cy="705" rx="8" ry="6" fill="#2a2010"/>
<ellipse cx="762" cy="701" rx="5" ry="3" fill="#8a7050"/>
</g>
<g clip-path="url(#ce4)">
<use href="#sunset" x="818.2" y="648" width="98" height="64"/>
<rect x="818.2" y="648" width="98" height="64" fill="#000" opacity="0.5"/>
<ellipse cx="867.2" cy="680" rx="33" ry="30" fill="#d09040" opacity="0.18"/><ellipse cx="867.2" cy="680" rx="33.5" ry="30.5" fill="none" stroke="#2a5ad0" stroke-width="1.5" opacity="0.7"/>
<path d="M858 667 L880 679 L859 691 Z" fill="#e0a040" opacity="0.45"/>
<rect x="818.2" y="648" width="98" height="64" fill="url(#pstr)"/>
</g>
</svg>
<div class="lbl" style="left:713px;top:623px;width:100px;font-size:12.6px">Blur</div>
<div class="lbl" style="left:813px;top:614.5px;width:108px;font-size:12.7px;line-height:16px">Brightness &amp;<br>Contrast</div>
<svg width="15" height="164" style="left:961px;top:544.5px" viewBox="961 544.5 15 164">
<rect x="961.5" y="546" width="14" height="162" fill="#3a3a3a" stroke="#2a2a2a" stroke-width="1"/>
<rect x="962.5" y="546.5" width="12" height="12" fill="#3a3a3a" stroke="#555" stroke-width="1"/>
<path d="M968.5 550.3 L972.7 554.5 H964.3 Z" fill="#c8c8c8"/>
<rect x="962.5" y="560" width="12" height="52.6" fill="#414141" stroke="#575757" stroke-width="1"/>
<rect x="962.5" y="695" width="12" height="12.5" fill="#3a3a3a" stroke="#555" stroke-width="1"/>
<path d="M968.5 703.2 L972.7 699 H964.3 Z" fill="#c8c8c8"/>
</svg>
<div class="dots" style="left:698px;top:586px;height:17px"></div>
<svg width="14" height="14" style="left:971px;top:726px" viewBox="971 726 14 14"><g fill="#9a9a9a"><rect x="982.2" y="728.2" width="2" height="2"/><rect x="979.2" y="731.2" width="2" height="2"/><rect x="982.2" y="731.2" width="2" height="2"/><rect x="976.2" y="734.2" width="2" height="2"/><rect x="979.2" y="734.2" width="2" height="2"/><rect x="982.2" y="734.2" width="2" height="2"/><rect x="973.2" y="737.2" width="2" height="2"/><rect x="976.2" y="737.2" width="2" height="2"/><rect x="979.2" y="737.2" width="2" height="2"/><rect x="982.2" y="737.2" width="2" height="2"/></g></svg>
</body></html>
